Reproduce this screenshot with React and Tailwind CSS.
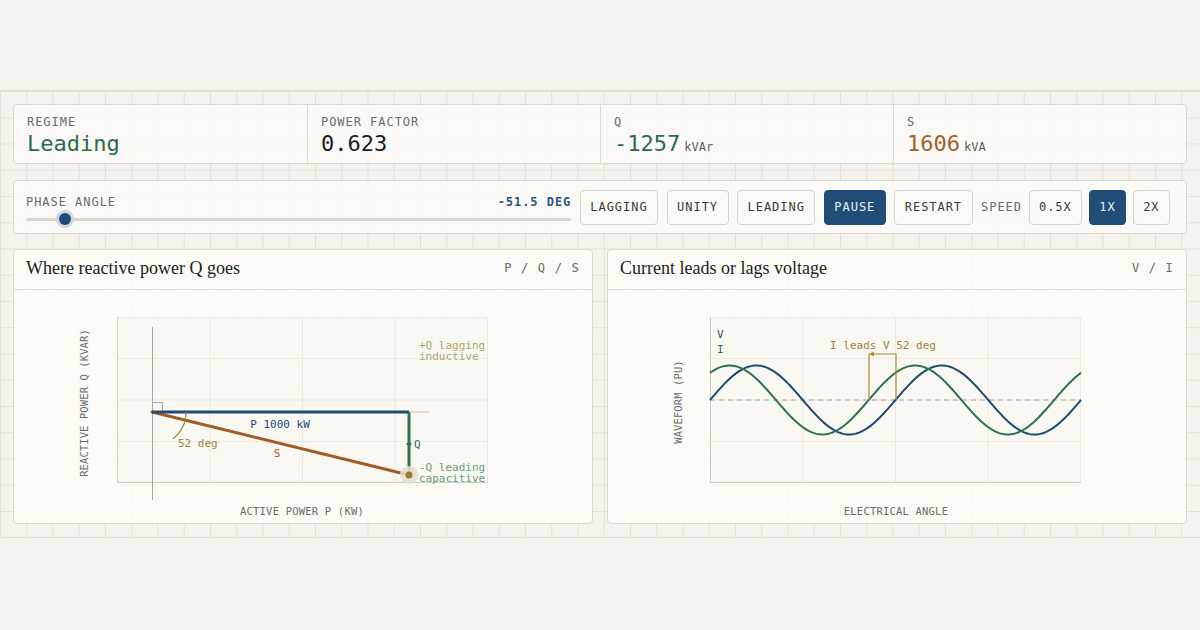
import React from "react";

const MONO = "font-['DejaVu_Sans_Mono','Liberation_Mono',monospace]";
const SERIF = "font-['Liberation_Serif','DejaVu_Serif',serif]";

function Stat({ label, value, unit, color, first }) {
  return (
    <div className={`flex flex-col pt-[9px] px-[13px] ${first ? "" : "border-l border-[#dcd9cf]"}`}>
      <div className="text-[12px] leading-4 tracking-[0.08em] text-[#6c6b66]">{label}</div>
      <div className="flex items-baseline gap-[4px] mt-[1px]">
        <span className={`text-[22px] leading-[26px] ${color}`}>{value}</span>
        {unit && <span className="text-[12px] text-[#5f5e5a]">{unit}</span>}
      </div>
    </div>
  );
}

function Btn({ children, active }) {
  return (
    <div
      className={`h-[35px] px-[9.5px] flex items-center rounded-[4px] border text-[12px] tracking-[0.08em] ${
        active
          ? "bg-[#1f4d78] border-[#1f4d78] text-[#eef2f6]"
          : "bg-[#faf9f5] border-[#d6d3c9] text-[#3c3b38]"
      }`}
    >
      {children}
    </div>
  );
}

function Panel({ title, tag, children }) {
  return (
    <div className="flex flex-col rounded-[4px] border border-[#dcd9cf] bg-[#fbfaf6]/85 overflow-hidden">
      <div className="h-[40px] shrink-0 border-b border-[#e2dfd6] px-3 pb-[3px] flex items-center justify-between">
        <div className={`${SERIF} text-[18px] text-[#1d1d1b]`}>{title}</div>
        <div className="text-[12px] tracking-[0.1em] text-[#6c6b66]">{tag}</div>
      </div>
      <div className="flex-1">{children}</div>
    </div>
  );
}

function PlotBox({ x }) {
  const xs = [0, 1, 2, 3, 4].map((i) => x + (371 / 4) * i);
  const ys = [0, 1, 2, 3, 4].map((i) => 27 + (166 / 4) * i);
  return (
    <g>
      <rect x={x} y={27} width={371} height={166} fill="#f8f7f2" />
      {xs.slice(1, 4).map((v) => (
        <line key={"v" + v} x1={v} x2={v} y1={27} y2={193} stroke="#ebe8e0" strokeWidth="1" />
      ))}
      {ys.slice(1, 4).map((v) => (
        <line key={"h" + v} x1={x} x2={x + 371} y1={v} y2={v} stroke="#ebe8e0" strokeWidth="1" />
      ))}
      <line x1={x} x2={x + 371} y1={27.5} y2={27.5} stroke="#ece9e1" />
      <line x1={x + 370.5} x2={x + 370.5} y1={27} y2={193} stroke="#ece9e1" />
      <line x1={x + 0.5} x2={x + 0.5} y1={27} y2={193} stroke="#cdcac0" />
      <line x1={x} x2={x + 371} y1={192.5} y2={192.5} stroke="#cdcac0" />
    </g>
  );
}

function PowerChart() {
  const ang = (52 * Math.PI) / 180;
  const r = 34;
  return (
    <svg width="578" height="233" className={MONO}>
      <PlotBox x={103} />
      <line x1={138.5} x2={138.5} y1={37} y2={210} stroke="#a9a69d" strokeWidth="1" />
      <line x1={138} x2={415} y1={122} y2={122} stroke="#c9c6bd" strokeWidth="1" />
      <rect x={138.5} y={112.5} width={10} height={9.5} fill="none" stroke="#a9a69d" strokeWidth="1" />
      <line x1={138} y1={122} x2={395} y2={185} stroke="#9e5c27" strokeWidth="3" strokeLinecap="round" />
      <line x1={138} y1={122} x2={395} y2={122} stroke="#1f4a75" strokeWidth="3" />
      <line x1={395} y1={122} x2={395} y2={185} stroke="#2f7150" strokeWidth="3" />
      <path d="M392 153 L398 153 L395 158 Z" fill="#2f7150" />
      <path
        d={`M${138 + r} 122 A ${r} ${r} 0 0 1 ${138 + r * Math.cos(ang)} ${122 + r * Math.sin(ang)}`}
        fill="none"
        stroke="#9d8540"
        strokeWidth="1.2"
      />
      <circle cx={395} cy={185} r={9} fill="#e6dccb" opacity="0.9" />
      <circle cx={395} cy={185} r={3.5} fill="#9a7a30" />
      <text x={266} y={138} fontSize="11" fill="#1f4a75" textAnchor="middle">P 1000 kW</text>
      <text x={263} y={167} fontSize="11" fill="#a5612b" textAnchor="middle">S</text>
      <text x={164} y={157} fontSize="11" fill="#9d8540">52 deg</text>
      <text x={400} y={158} fontSize="11" fill="#2f7150">Q</text>
      <text x={405} y={59} fontSize="11" fill="#b5a26a">+Q lagging</text>
      <text x={405} y={70} fontSize="11" fill="#b5a26a">inductive</text>
      <text x={405} y={181} fontSize="11" fill="#6c9b82">-Q leading</text>
      <text x={405} y={192} fontSize="11" fill="#6c9b82">capacitive</text>
      <text
        x={0}
        y={0}
        fontSize="10.5"
        letterSpacing="0.1"
        fill="#6c6b66"
        textAnchor="middle"
        transform="translate(74 113) rotate(-90)"
      >
        REACTIVE POWER Q (KVAR)
      </text>
      <text x={288} y={225} fontSize="10.5" letterSpacing="0.2" fill="#6c6b66" textAnchor="middle">
        ACTIVE POWER P (KW)
      </text>
    </svg>
  );
}

function wave(phaseDeg) {
  const pts = [];
  const x0 = 102;
  const w = 371;
  const period = 185.5;
  const ph = (phaseDeg * Math.PI) / 180;
  for (let i = 0; i <= 200; i++) {
    const x = x0 + (w * i) / 200;
    const y = 110 - 34.5 * Math.sin((2 * Math.PI * (x - x0)) / period + ph);
    pts.push(`${i === 0 ? "M" : "L"}${x.toFixed(2)} ${y.toFixed(2)}`);
  }
  return pts.join(" ");
}

function WaveChart() {
  return (
    <svg width="578" height="233" className={MONO}>
      <PlotBox x={102} />
      <line x1={102} x2={473} y1={110} y2={110} stroke="#a9a69d" strokeWidth="1" strokeDasharray="5 4" />
      <path d={wave(0)} fill="none" stroke="#1f4a75" strokeWidth="2" />
      <path d={wave(52)} fill="none" stroke="#2f7150" strokeWidth="2" />
      <polyline points="261,110 261,64 288,64 288,110" fill="none" stroke="#a98a3c" strokeWidth="1.2" />
      <path d="M261 64 L266 61.5 L266 66.5 Z" fill="#a98a3c" />
      <text x={275} y={59} fontSize="11" fill="#a0823a" textAnchor="middle">I leads V 52 deg</text>
      <text x={109} y={48} fontSize="11" fill="#1f4a75">V</text>
      <text x={109} y={63} fontSize="11" fill="#2f7150">I</text>
      <text
        x={0}
        y={0}
        fontSize="10.5"
        letterSpacing="0.1"
        fill="#6c6b66"
        textAnchor="middle"
        transform="translate(74 112) rotate(-90)"
      >
        WAVEFORM (PU)
      </text>
      <text x={288} y={225} fontSize="10.5" letterSpacing="0.2" fill="#6c6b66" textAnchor="middle">
        ELECTRICAL ANGLE
      </text>
    </svg>
  );
}

export default function App() {
  const angle = -51.5;
  const frac = (angle + 60) / 120;
  return (
    <div className={`h-[630px] w-[1200px] bg-[#f4f3ee] flex flex-col pt-[90px] ${MONO}`}>
      <div className="w-full h-[448px] border-y border-[#e2dfd6] bg-[linear-gradient(to_right,#e4e1d8_1px,transparent_1px),linear-gradient(to_bottom,#e4e1d8_1px,transparent_1px)] bg-[size:26.25px_26.25px] px-[13px] pt-[13px] flex flex-col">
        <div className="h-[60px] shrink-0 grid grid-cols-4 rounded-[4px] border border-[#dcd9cf] bg-[#fbfaf6]/90">
          <Stat first label="REGIME" value="Leading" color="text-[#2d6b4d]" />
          <Stat label="POWER FACTOR" value="0.623" color="text-[#1c1c1a]" />
          <Stat label="Q" value="-1257" unit="kVAr" color="text-[#2d6b4d]" />
          <Stat label="S" value="1606" unit="kVA" color="text-[#a2612c]" />
        </div>

        <div className="mt-4 h-[54px] shrink-0 flex items-center gap-[8.5px] pl-3 pr-4 rounded-[4px] border border-[#dcd9cf] bg-[#fbfaf6]/90">
          <div className="flex-1 flex flex-col pt-[6px]">
            <div className="h-4 flex items-center justify-between text-[12px] tracking-[0.08em]">
              <span className="text-[#6c6b66]">PHASE ANGLE</span>
              <span className="text-[#2a5582] font-semibold">-51.5 DEG</span>
            </div>
            <div className="relative h-[14px] mt-[2px]">
              <div className="absolute left-0 right-0 top-[6px] h-[3px] rounded-full bg-[#d9d6cb]" />
              <div
                className="absolute top-[1px] w-3 h-3 -ml-[6px] rounded-full bg-[#1f4d78] ring-[3px] ring-[#cdd6df]"
                style={{ left: `${frac * 100}%` }}
              />
            </div>
          </div>
          <Btn>LAGGING</Btn>
          <Btn>UNITY</Btn>
          <Btn>LEADING</Btn>
          <Btn active>PAUSE</Btn>
          <Btn>RESTART</Btn>
          <div className="flex items-center gap-[6.5px]">
            <span className="text-[12px] tracking-[0.08em] text-[#6c6b66]">SPEED</span>
            <Btn>0.5X</Btn>
            <Btn active>1X</Btn>
            <Btn>2X</Btn>
          </div>
        </div>

        <div className="mt-[15px] h-[275px] shrink-0 grid grid-cols-2 gap-[14px]">
          <Panel title="Where reactive power Q goes" tag="P / Q / S">
            <PowerChart />
          </Panel>
          <Panel title="Current leads or lags voltage" tag="V / I">
            <WaveChart />
          </Panel>
        </div>
      </div>
    </div>
  );
}
